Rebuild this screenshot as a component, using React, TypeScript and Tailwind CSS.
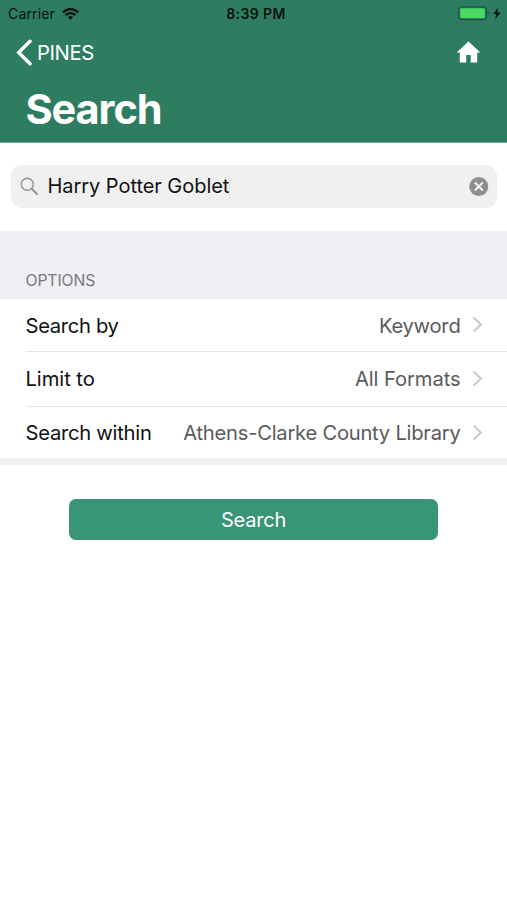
import React from "react";

const options = [
  { label: "Search by", value: "Keyword", spacing: "pt-[2px] tracking-[-0.32px]", valueSpacing: "pt-[2px] tracking-[-0.25px]", height: "h-[53px]" },
  { label: "Limit to", value: "All Formats", spacing: "tracking-[-0.05px]", valueSpacing: "tracking-[-0.1px]", height: "h-[55px]" },
  { label: "Search within", value: "Athens-Clarke County Library", spacing: "tracking-[-0.26px]", valueSpacing: "tracking-[-0.25px]", height: "h-[53px]" },
];

function Chevron() {
  return (
    <svg className="ml-3 h-4 w-[10px] shrink-0" viewBox="0 0 10 16" fill="none" stroke="#c7c7cb" strokeWidth="1.9">
      <path d="M.5 .5 8 7.5 .5 14.5" />
    </svg>
  );
}

function StatusBar() {
  return (
    <div className="grid h-[27px] grid-cols-3 items-center pl-2 pr-[6px] text-[14px] text-[#07130f]">
      <div className="flex items-center gap-[7px]">
        <span className="tracking-[0.15px]">Carrier</span>
        <svg className="h-3 w-[17px]" viewBox="0 0 17 12" fill="none" stroke="#07130f" strokeWidth="2.3">
          <path d="M.8 4.3Q8.5-2.2 16.2 4.3M3.5 7.2Q8.5 3 13.5 7.2" />
          <path d="M5.8 9Q8.5 7 11.2 9L8.5 11.8Z" fill="#07130f" stroke="none" />
        </svg>
      </div>
      <span className="pl-[3px] text-center font-semibold tracking-[0.4px]">8:39 PM</span>
      <div className="flex items-center justify-end">
        <svg className="h-[15px] w-[44px]" viewBox="0 0 44 15">
          <rect x="1.7" y=".8" width="27.6" height="12.8" rx="3" fill="none" stroke="#1b5846" strokeWidth="1.3" />
          <rect x="3.2" y="2.3" width="24.6" height="9.8" rx="1.2" fill="#4cd964" />
          <path d="M30.7 5v4.6q2.4-2.3 0-4.6" fill="#1b5846" />
          <path d="M41.2 1.5 36.3 8h3.1l-1.4 5.5L43.6 6.4h-3.3Z" fill="#07130f" />
        </svg>
      </div>
    </div>
  );
}

export default function App() {
  return (
    <div className="flex h-[900px] w-[507px] flex-col overflow-hidden bg-white font-['Inter','Liberation_Sans',sans-serif] text-[#111]">
      <header className="h-[143px] border-b border-[#72a996] bg-[#2f7d61]">
        <StatusBar />
        <div className="flex h-[50px] items-center justify-between pl-4 pr-[26.5px] text-[20.3px] text-white">
          <div className="flex items-center gap-[5px]">
            <svg className="h-[27px] w-4" viewBox="0 0 16 27" fill="none" stroke="white" strokeWidth="3.4" strokeLinecap="round">
              <path d="M14 2.2 2.7 13.5 14 24.8" />
            </svg>
            <span className="pt-[2px] tracking-[-0.4px]">PINES</span>
          </div>
          <svg className="mb-px h-[22px] w-[25px]" viewBox="0 0 25 22" fill="white">
            <path d="M12.5.5 24.3 11.5H21.2V21.5H14.7V14H10.2V21.5H3.8V11.5H.7Z" />
          </svg>
        </div>
        <h1 className="pl-[25.5px] pt-px text-[41.5px] font-bold leading-[62px] tracking-[-1.1px] text-white">Search</h1>
      </header>
      <div className="flex h-[88px] items-start px-[10.5px] pt-[22px]">
        <div className="flex h-[43px] w-full items-center rounded-[11px] bg-[#f0f0f1] pl-[9px] pr-[8px]">
          <svg className="h-[19px] w-[19px] shrink-0" viewBox="0 0 19 19" fill="none" stroke="#929295">
            <circle cx="7.3" cy="7.3" r="6" strokeWidth="1.4" />
            <path d="m11.8 11.8 5.7 5.7" strokeWidth="2" />
          </svg>
          <span className="ml-[9px] pb-[2px] text-[20px] tracking-[-0.05px]">Harry Potter Goblet</span>
          <span className="h-[25px] w-px bg-[#e2e2e5]" />
          <svg className="ml-auto h-5 w-5 shrink-0" viewBox="0 0 20 20">
            <circle cx="9.8" cy="9.5" r="9.5" fill="#8e8e91" />
            <path d="m5.8 5.5 8 8M13.8 5.5l-8 8" fill="none" stroke="#f5f5f5" strokeWidth="1.9" />
          </svg>
        </div>
      </div>
      <h2 className="h-[68px] border-b border-[#e4e4e8] bg-[#efeff4] pl-[25.5px] pt-[38px] text-[15.7px] tracking-[-0.08px] text-[#78787d]">OPTIONS</h2>
      <div className="h-[159px]">
        {options.map((option, index) => (
          <div key={option.label} className={`ml-[25.5px] flex items-center justify-between pr-[24.5px] text-[20.2px] ${option.height} ${index < 2 ? "border-b border-[#e5e5e7]" : ""}`}>
            <span className={option.spacing}>{option.label}</span>
            <span className="flex items-center text-[#5b5b5e]">
              <span className={option.valueSpacing}>{option.value}</span>
              <Chevron />
            </span>
          </div>
        ))}
      </div>
      <div className="h-[7px] bg-[#f0f0f1]" />
      <button className="mx-[69px] mt-[34px] h-[41px] rounded-[7px] bg-[#389576] text-[20px] tracking-[-0.2px] text-white">Search</button>
    </div>
  );
}
